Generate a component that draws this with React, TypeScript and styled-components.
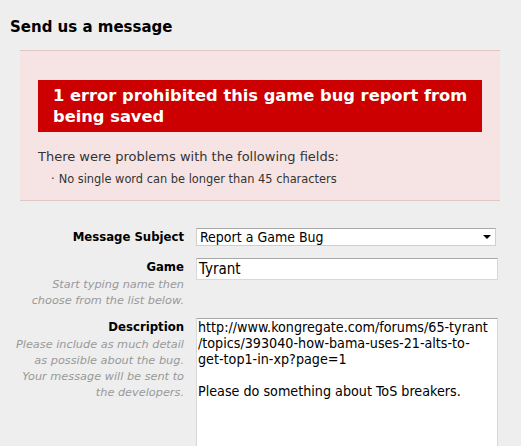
import React from "react";
import styled, { createGlobalStyle } from "styled-components";

const Global = createGlobalStyle`
  html, body { margin: 0; padding: 0; background: #eeeeee; }
  body { font-family: "DejaVu Sans", Verdana, sans-serif; color: #000; }
`;

const Page = styled.div`
  width: 500px;
`;

const Heading = styled.h2`
  margin: 0;
  padding: 19px 0 0 10px;
  height: 36px;
  box-sizing: border-box;
  font-size: 15px;
  font-weight: bold;
  line-height: 16px;
`;

const ErrorPanel = styled.div`
  margin: 14px 0 0 20px;
  background: #f6e4e4;
  border-top: 1px solid #e2c5c5;
  border-bottom: 1px solid #e2c5c5;
  padding: 29px 18px 14px 18px;
`;

const ErrorTitle = styled.h3`
  margin: 0;
  background: #cc0000;
  color: #fff;
  font-size: 16.3px;
  font-weight: bold;
  line-height: 21px;
  padding: 5px 4px 5px 15px;
`;

const ErrorIntro = styled.p`
  margin: 17px 0 0 0;
  font-size: 13px;
  line-height: 16px;
  color: #333;
`;

const ErrorList = styled.ul`
  margin: 7px 0 0 0;
  padding: 0 0 0 13px;
  list-style: none;
`;

const ErrorItem = styled.li`
  font-size: 11.4px;
  line-height: 14px;
  color: #333;
  &::before {
    content: "·";
    margin-right: 4px;
  }
`;

const Form = styled.form`
  margin: 27px 0 0 0;
  display: flex;
  flex-direction: column;
`;

const Row = styled.div<{ $gap: number }>`
  display: grid;
  grid-template-columns: 184px 1fr;
  column-gap: 12px;
  align-items: start;
  margin-top: ${(p) => p.$gap}px;
`;

const LabelCol = styled.div`
  text-align: right;
`;

const Label = styled.label`
  display: block;
  font-family: "DejaVu Sans Condensed", "DejaVu Sans", sans-serif;
  font-size: 13px;
  font-weight: bold;
  line-height: 18px;
`;

const Hint = styled.div`
  font-size: 11.3px;
  font-style: italic;
  color: #999;
  line-height: 16px;
  margin-top: 1px;
`;

const SelectBox = styled.div`
  position: relative;
  height: 18px;
  width: 300px;
  background: #fff;
  border: 1px solid #cfcfcf;
  border-top-color: #a8a8a8;
  box-sizing: border-box;
  font-family: "DejaVu Sans Condensed", Tahoma, sans-serif;
  font-size: 14px;
  line-height: 16px;
  padding-left: 3px;
`;

const Arrow = styled.span`
  position: absolute;
  right: 4px;
  top: 6px;
  width: 0;
  height: 0;
  border-left: 4px solid transparent;
  border-right: 4px solid transparent;
  border-top: 4px solid #000;
`;

const TextInput = styled.div`
  width: 302px;
  height: 22px;
  background: #fff;
  border: 1px solid #d8d8d8;
  border-top-color: #a8a8a8;
  box-sizing: border-box;
  font-family: "DejaVu Sans Condensed", Tahoma, sans-serif;
  font-size: 15px;
  line-height: 20px;
  padding-left: 2px;
`;

const TextArea = styled.div`
  width: 302px;
  height: 160px;
  background: #fff;
  border: 1px solid #d8d8d8;
  border-top-color: #a8a8a8;
  box-sizing: border-box;
  font-family: "DejaVu Sans Condensed", Tahoma, sans-serif;
  font-size: 14.2px;
  line-height: 16px;
  padding: 0 1px;
  white-space: pre;
`;

export default function App() {
  return (
    <>
      <Global />
      <Page>
        <Heading>Send us a message</Heading>
        <ErrorPanel>
          <ErrorTitle>1 error prohibited this game bug report from being saved</ErrorTitle>
          <ErrorIntro>There were problems with the following fields:</ErrorIntro>
          <ErrorList>
            <ErrorItem>No single word can be longer than 45 characters</ErrorItem>
          </ErrorList>
        </ErrorPanel>
        <Form>
          <Row $gap={0}>
            <LabelCol>
              <Label>Message Subject</Label>
            </LabelCol>
            <SelectBox>
              Report a Game Bug
              <Arrow />
            </SelectBox>
          </Row>
          <Row $gap={12}>
            <LabelCol>
              <Label>Game</Label>
              <Hint>
                Start typing name then
                <br />
                choose from the list below.
              </Hint>
            </LabelCol>
            <TextInput>Tyrant</TextInput>
          </Row>
          <Row $gap={9}>
            <LabelCol>
              <Label>Description</Label>
              <Hint>
                Please include as much detail
                <br />
                as possible about the bug.
                <br />
                Your message will be sent to
                <br />
                the developers.
              </Hint>
            </LabelCol>
            <TextArea>
              {"http://www.kongregate.com/forums/65-tyrant\n/topics/393040-how-bama-uses-21-alts-to-\nget-top1-in-xp?page=1\n\nPlease do something about ToS breakers."}
            </TextArea>
          </Row>
        </Form>
      </Page>
    </>
  );
}
